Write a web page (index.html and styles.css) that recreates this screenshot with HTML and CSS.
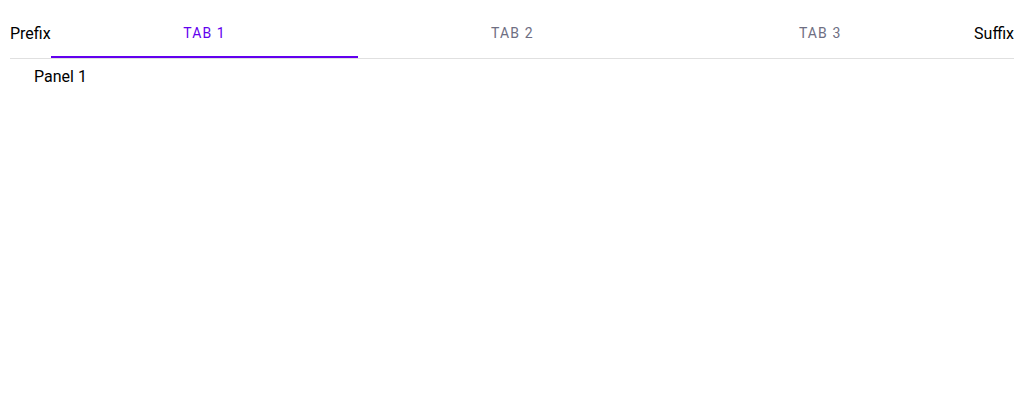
FILE: index.html
```html
<!DOCTYPE html>
<html>
<head>
<meta charset="utf-8">
<link rel="stylesheet" href="styles.css">
</head>
<body>
<div class="wrap">
  <div class="tabbar">
    <div class="affix">Prefix</div>
    <div class="tabs">
      <div class="tab active">Tab 1<span class="indicator"></span></div>
      <div class="tab">Tab 2</div>
      <div class="tab">Tab 3</div>
    </div>
    <div class="affix">Suffix</div>
  </div>
  <div class="panel">Panel 1</div>
</div>
</body>
</html>
```
FILE: styles.css
```css
html, body { margin: 0; background: #fff; }
body { font-family: Roboto, "Noto Sans", sans-serif; color: #000; }
.wrap { padding: 10px; }
.tabbar {
  display: flex;
  align-items: center;
  border-bottom: 1px solid #e0e0e0;
  height: 48px;
}
.affix { font-size: 16px; line-height: 24px; }
.tabs { flex: 1; display: flex; align-self: stretch; }
.tab {
  position: relative;
  flex: 1;
  display: flex;
  align-items: center;
  justify-content: center;
  font-size: 14px;
  font-weight: 400;
  letter-spacing: 1.1px;
  text-transform: uppercase;
  color: #6e6e82;
  padding-bottom: 2px;
}
.tab.active { color: #6200ee; }
.indicator {
  position: absolute;
  left: 0; right: 0; bottom: 0;
  height: 2px;
  background: #6200ee;
}
.panel { font-size: 16px; line-height: 24px; padding: 6px 24px; }
```
